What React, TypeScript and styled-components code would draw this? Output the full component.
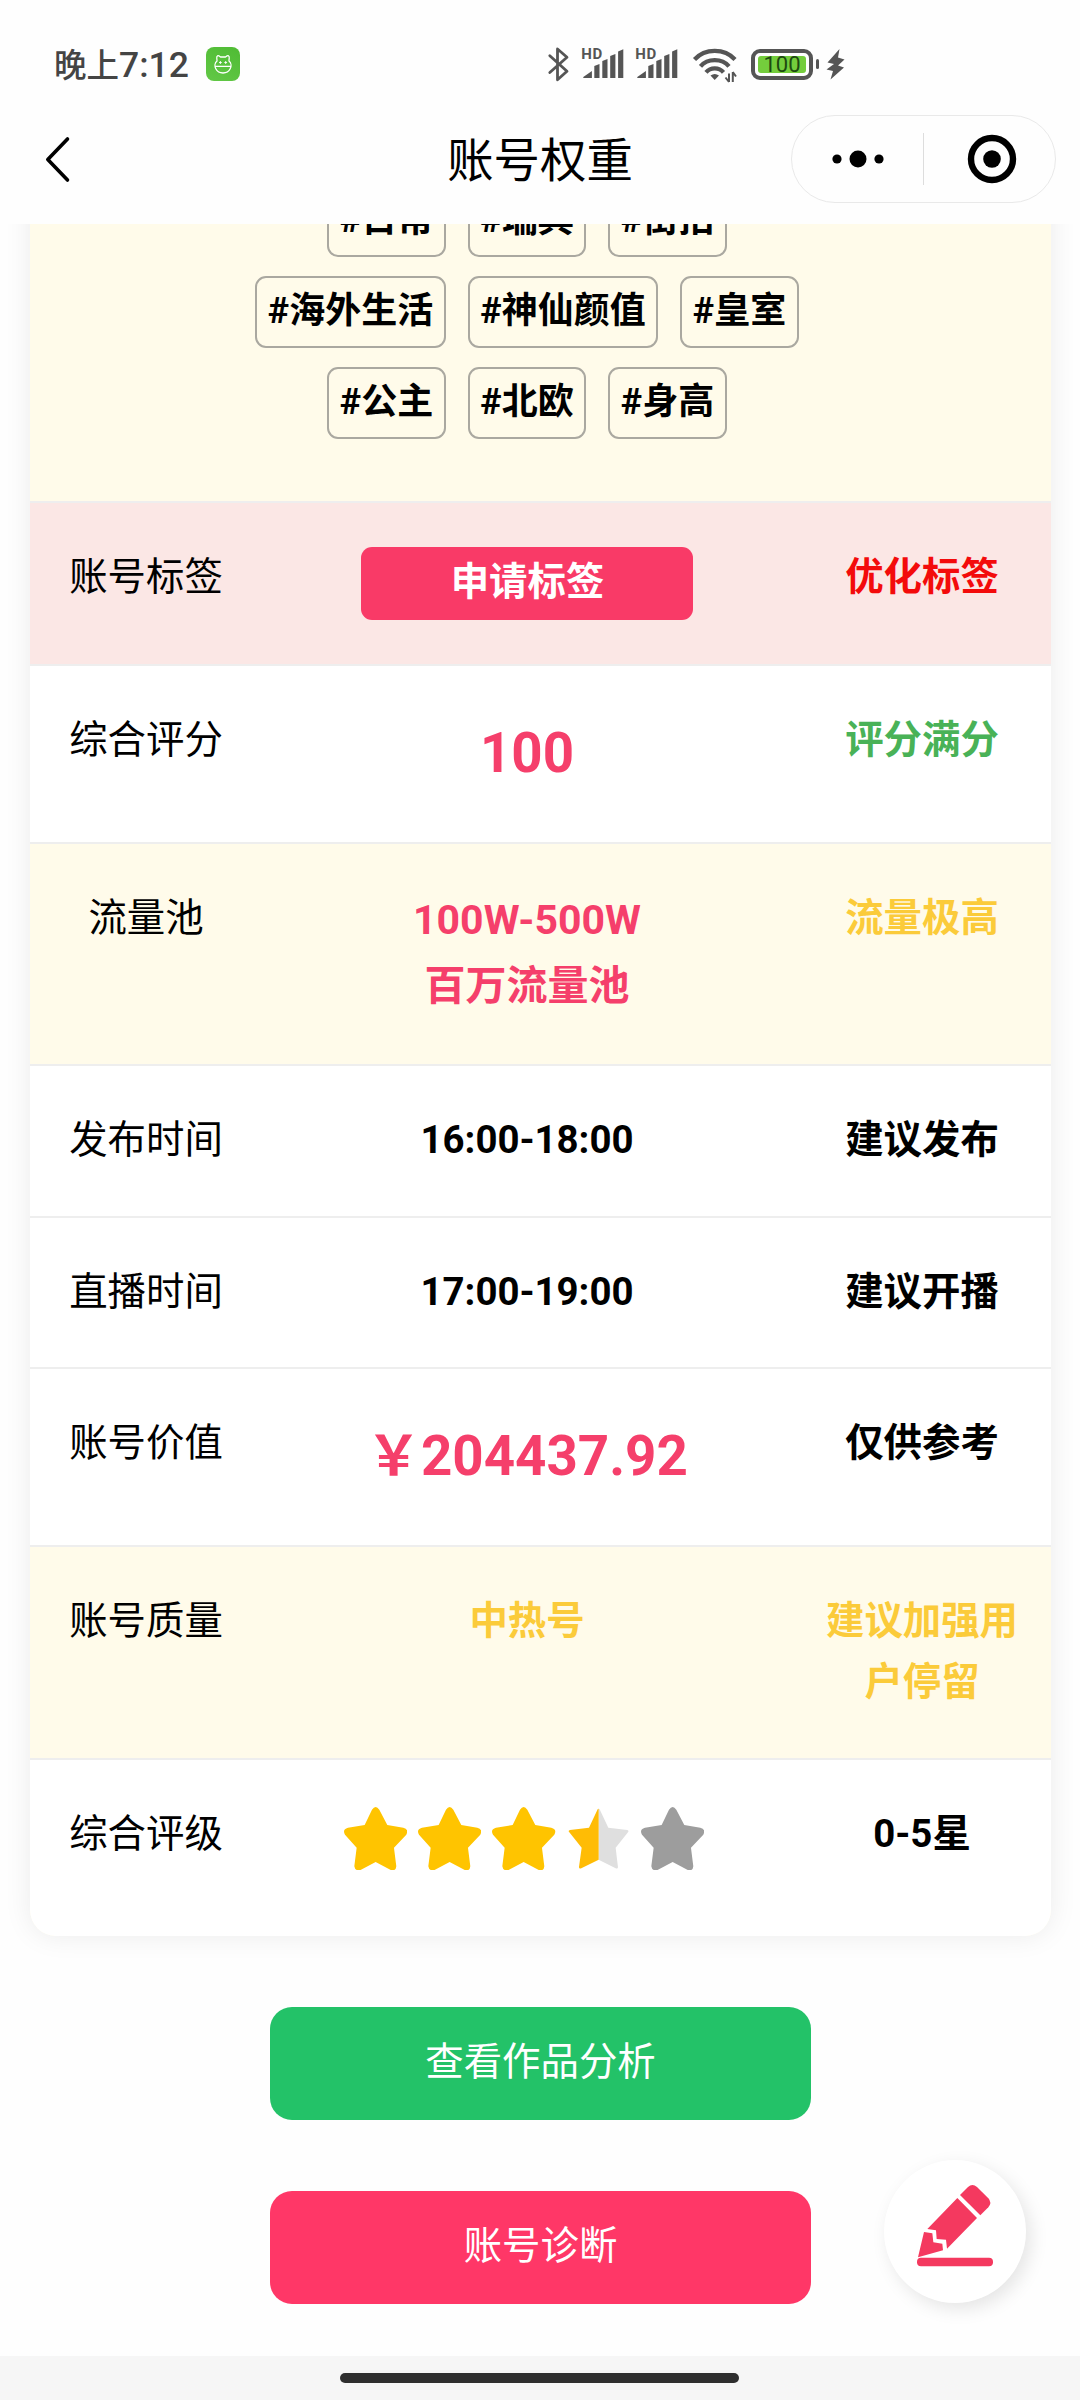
import React from "react";
import styled, { createGlobalStyle } from "styled-components";

const Global = createGlobalStyle`
  * { box-sizing: border-box; }
  body {
    margin: 0;
    background: #fefefe;
    font-family: Roboto, "Noto Sans CJK SC", sans-serif;
    color: #000;
  }
`;

const Screen = styled.div`
  width: 1080px;
  height: 2400px;
  display: flex;
  flex-direction: column;
  overflow: hidden;
  background: #fefefe;
`;

const StatusBar = styled.div`
  height: 115px;
  flex: none;
  display: flex;
  align-items: flex-start;
  padding: 47px 0 0 54px;
  color: #444;
`;

const Clock = styled.div`
  font-size: 35.5px;
  line-height: 36px;
  height: 34px;
  font-weight: 500;
  width: 152px;
  white-space: nowrap;
  span { font-size: 32.5px; }
`;

const AppBadge = styled.svg`
  width: 34px;
  height: 34px;
  margin-right: 308px;
  border-radius: 8px;
  background: linear-gradient(25deg, #62c846, #4fbb34);
`;

const StatusIcon = styled.svg<{ $w: number; $gap: number }>`
  width: ${(p) => p.$w}px;
  height: 36px;
  margin-right: ${(p) => p.$gap}px;
  overflow: visible;
  flex: none;
`;

const Battery = styled.div`
  width: 62px;
  height: 31px;
  margin: 2px 2.5px 0 0;
  padding: 3px;
  border: 4px solid #555;
  border-radius: 9px;
`;

const Charge = styled.div`
  height: 17px;
  border-radius: 3px;
  background: #74cd3c;
  color: #1d4a10;
  font-size: 22px;
  line-height: 18px;
  text-align: center;
`;

const Nub = styled.div`
  width: 3.5px;
  height: 10px;
  margin: 12px 7px 0 0;
  border-radius: 2px;
  background: #555;
`;

const NavBar = styled.div`
  height: 109px;
  flex: none;
  display: grid;
  grid-template-columns: 289px 1fr 265px;
  padding: 0 24px 0 0;
`;

const BackIcon = styled.svg`
  width: 30px;
  height: 50px;
  margin: 20px 0 0 42px;
`;

const Title = styled.h1`
  margin: 0;
  font-size: 46.4px;
  font-weight: 400;
  line-height: 93px;
  text-align: center;
  white-space: nowrap;
`;

const Capsule = styled.div`
  width: 265px;
  height: 88px;
  border: 1.5px solid #e9e9e9;
  border-radius: 44px;
  display: flex;
  align-items: center;
`;

const CapsuleHalf = styled.div`
  width: 131px;
  display: flex;
  align-items: center;
  justify-content: center;
  & + div + & {
    padding-left: 5px;
  }
  svg { display: block; }
`;

const CapsuleLine = styled.div`
  width: 1px;
  height: 52px;
  background: #ddd;
`;

const Scroll = styled.main`
  flex: 1;
  min-height: 0;
  overflow: hidden;
  padding: 0 29px 0 30px;
`;

const Card = styled.section`
  margin-top: -80px;
  padding-top: 41px;
  height: 1792px;
  border-radius: 26px;
  overflow: hidden;
  background: #fffbea;
  box-shadow: 0 0 28px rgba(0, 0, 0, 0.08);
`;

const Tags = styled.div`
  height: 316px;
  display: flex;
  flex-direction: column;
  gap: 19px;
  padding-right: 27px;
`;

const TagLine = styled.div`
  display: flex;
  justify-content: center;
  gap: 22.2px;
`;

const Tag = styled.span`
  height: 72px;
  padding: 0 10.5px;
  border: 2px solid #aaa8a0;
  border-radius: 11px;
  font-size: 36px;
  font-weight: 700;
  line-height: 66px;
  white-space: nowrap;
`;

const Row = styled.div<{ $h: number; $bg: string }>`
  height: ${(p) => p.$h}px;
  display: grid;
  grid-template-columns: 232px 530px 259px;
  padding-top: 42.5px;
  border-top: 2px solid #eeeeee;
  background: ${(p) => p.$bg};
  font-size: 38.4px;
  line-height: 61.4px;
  text-align: center;
`;

const Label = styled.div``;

const Value = styled.div<{ $color?: string; $size?: number }>`
  font-weight: 700;
  padding-top: ${(p) => (p.$size ? 1.5 : 0)}px;
  color: ${(p) => p.$color ?? "#000"};
  font-size: ${(p) => p.$size ?? 38.4}px;
  line-height: 1.6;
`;

const Hint = styled.div<{ $color?: string }>`
  padding: 0 19.5px 0 20.5px;
  font-weight: 700;
  color: ${(p) => p.$color ?? "#000"};
`;

const ApplyButton = styled.button`
  display: block;
  width: 332px;
  height: 73px;
  margin: 1.5px auto 0;
  padding: 0 0 4px 1px;
  border: 0;
  border-radius: 11px;
  background: #f93a67;
  color: #fff;
  font: inherit;
  line-height: 69px;
`;

const Stars = styled.div`
  display: flex;
  justify-content: center;
  gap: 11px;
  padding: 4.5px 6px 0 0;
  svg { width: 63.3px; height: 63.3px; display: block; }
`;

const Actions = styled.div`
  display: flex;
  flex-direction: column;
  align-items: center;
  gap: 71px;
  padding-top: 71px;
`;

const Action = styled.button<{ $bg: string }>`
  width: 541px;
  height: 113px;
  padding: 0 0 11px;
  border: 0;
  border-radius: 22px;
  background: ${(p) => p.$bg};
  color: #fff;
  font-family: inherit;
  font-size: 38.4px;
`;

const Fab = styled.button`
  position: absolute;
  left: 884px;
  top: 2160px;
  width: 142px;
  height: 143px;
  padding: 0;
  border: 0;
  border-radius: 50%;
  background: #fff;
  box-shadow: 5px 6px 18px rgba(0, 0, 0, 0.1);
  svg { display: block; }
`;

const HomeBar = styled.div`
  height: 44px;
  flex: none;
  background: #f6f6f6;
  padding: 17px 1px 0 0;
`;

const HomePill = styled.div`
  width: 399px;
  height: 10px;
  margin: 0 auto;
  border-radius: 5px;
  background: #2f2f2f;
`;

const PINK = "#f53f6b";
const AMBER = "#fbcb3a";
const CREAM = "#fffbea";

const STAR =
  "M84 8 Q95 -8 106 8 L130 54 L178 62 Q196 67 187 83 L150 122 L157 178 Q156 192 142 190 L95 165 L48 190 Q33 192 31 178 L38 122 L3 83 Q-6 67 12 62 L62 54 Z";

function Star({ kind }: { kind: "full" | "half" | "empty" }) {
  if (kind === "half") {
    return (
      <svg viewBox="0 0 190 190">
        <path d="M95 5 Q98 5 99 9 L124 62 L181 69 Q187 71 183 76 L146 122 L153 180 Q153 187 146 184 L95 158 Z" fill="#dfdfdf" />
        <path d="M95 5 Q92 5 91 9 L66 62 L9 69 Q2 71 7 76 L44 122 L36 180 Q36 187 43 184 L95 158 Z" fill="#ffbc05" />
      </svg>
    );
  }
  return (
    <svg viewBox="0 0 190 190">
      <path d={STAR} fill={kind === "full" ? "#ffc400" : "#9d9d9d"} />
    </svg>
  );
}

function Signal({ gap }: { gap: number }) {
  return (
    <StatusIcon $w={42} $gap={gap} viewBox="0 0 42 36" fill="#555">
      <text x="-0.8" y="11.5" fontSize="15" fontWeight="700" letterSpacing="0.8" fontFamily="Roboto">HD</text>
      <path d="M1.300 31v-1l8.600-6v7z M12.300 31V19l5.200-2v14z M20.300 31V14l5.200-2v19z M28.200 31V9l5.200-2v24z M36.100 31V4.500l5.200-2.200v28.700z" />
    </StatusIcon>
  );
}

const tagLines = [
  ["日常", "瑞典", "街拍"],
  ["海外生活", "神仙颜值", "皇室"],
  ["公主", "北欧", "身高"],
];

export default function App() {
  return (
    <Screen>
      <Global />
      <StatusBar>
        <Clock><span>晚上</span>7:12</Clock>
        <AppBadge viewBox="0 0 34 34" fill="none" stroke="#fff" strokeWidth="1.3">
          <path d="M11 14C11 11 10 9.500 11.500 8.800S14 10 14.500 10h5c.500 0 1.500-1.800 3-1.200S23 11 23 14c2.500 2 2.400 5.500 1.200 7.800C22.800 24.500 20 26 17 26s-5.800-1.500-7.200-4.200C8.600 19.500 8.500 16 11 14z M9 19.300h16" />
          <path d="M14.400 14v3M19.700 14v3M13 15.500h2.800M18.300 15.500h2.800" strokeWidth="0.9" />
        </AppBadge>
        <StatusIcon $w={21} $gap={13} viewBox="0 0 21 36" fill="none" stroke="#555" strokeWidth="2.8" strokeLinejoin="round" strokeLinecap="round">
          <path d="M1.800 8.800L19 24.200 9.500 32.800V2L19 10.300 1.800 25.500" />
        </StatusIcon>
        <Signal gap={12} />
        <Signal gap={15} />
        <StatusIcon $w={43} $gap={15} viewBox="0 0 43 36" fill="none" stroke="#555" strokeWidth="4.200">
          <path d="M1.500 12.500C12 1 31.500 1 42 12.500M7.500 19.300C14.500 11 29 11 36 19.300M13 25.300C17.500 20 26 20 30.500 25.300" />
          <path d="M17.500 28.500Q21.700 25.500 26 28.500L21.700 33z" fill="#555" stroke="none" />
          <path d="M36 35V26.500M36 35l-3.500-4.500M39.800 25v10M39.800 25l3.200 4.500" strokeWidth="2" />
        </StatusIcon>
        <Battery><Charge>100</Charge></Battery>
        <Nub />
        <StatusIcon $w={19} $gap={0} viewBox="0 0 19 36" fill="#555">
          <path d="M13.500 2L1.500 15.500 8 17 .5 22.500 7 24 4.500 32.500 18 20.500 12 18.500 18.500 12.500 12 10.500z" />
        </StatusIcon>
      </StatusBar>

      <NavBar>
        <BackIcon viewBox="0 0 30 50" fill="none" stroke="#000" strokeWidth="3.600" strokeLinecap="round" strokeLinejoin="round">
          <path d="M25.500 4L5.800 24.500 25.500 45" />
        </BackIcon>
        <Title>账号权重</Title>
        <Capsule>
          <CapsuleHalf>
            <svg width="54" height="20" viewBox="0 0 54 20">
              <circle cx="6" cy="10" r="4.600" /><circle cx="27" cy="10" r="8.500" /><circle cx="48" cy="10" r="4.600" />
            </svg>
          </CapsuleHalf>
          <CapsuleLine />
          <CapsuleHalf>
            <svg width="50" height="50" viewBox="0 0 50 50">
              <circle cx="25" cy="25" r="21" fill="none" stroke="#000" strokeWidth="6.400" /><circle cx="25" cy="25" r="8.800" />
            </svg>
          </CapsuleHalf>
        </Capsule>
      </NavBar>

      <Scroll>
        <Card>
          <Tags>
            {tagLines.map((line) => (
              <TagLine key={line[0]}>
                {line.map((t) => <Tag key={t}>#{t}</Tag>)}
              </TagLine>
            ))}
          </Tags>
          <Row $h={163} $bg="#fbe7e5">
            <Label>账号标签</Label>
            <Value><ApplyButton>申请标签</ApplyButton></Value>
            <Hint $color="#f30b0b">优化标签</Hint>
          </Row>
          <Row $h={178} $bg="#fff">
            <Label>综合评分</Label>
            <Value $color={PINK} $size={54.7}>100</Value>
            <Hint $color="#49b257">评分满分</Hint>
          </Row>
          <Row $h={222} $bg={CREAM}>
            <Label>流量池</Label>
            <Value $color={PINK} $size={41}>100W-500W<br />百万流量池</Value>
            <Hint $color={AMBER}>流量极高</Hint>
          </Row>
          <Row $h={152} $bg="#fff">
            <Label>发布时间</Label>
            <Value>16:00-18:00</Value>
            <Hint>建议发布</Hint>
          </Row>
          <Row $h={151} $bg="#fff">
            <Label>直播时间</Label>
            <Value>17:00-19:00</Value>
            <Hint>建议开播</Hint>
          </Row>
          <Row $h={178} $bg="#fff">
            <Label>账号价值</Label>
            <Value $color={PINK} $size={54.7}>￥204437.92</Value>
            <Hint>仅供参考</Hint>
          </Row>
          <Row $h={213} $bg={CREAM}>
            <Label>账号质量</Label>
            <Value $color={AMBER}>中热号</Value>
            <Hint $color={AMBER}>建议加强用户停留</Hint>
          </Row>
          <Row $h={178} $bg="#fff">
            <Label>综合评级</Label>
            <Stars>
              <Star kind="full" /><Star kind="full" /><Star kind="full" /><Star kind="half" /><Star kind="empty" />
            </Stars>
            <Hint>0-5星</Hint>
          </Row>
        </Card>
        <Actions>
          <Action $bg="#23c268">查看作品分析</Action>
          <Action $bg="#ff3767">账号诊断</Action>
        </Actions>
      </Scroll>

      <Fab aria-label="edit">
        <svg width="142" height="143" viewBox="132 90 426 429" fill="#f4395f">
          <rect x="231" y="383" width="228" height="26" rx="12" />
          <path d="M360 195L384 171Q397 159 411 171L445 205Q457 218 445 232L421 256Z" />
          <path d="M352 204L411 264L321 356L318 329L290 327L288 301L262 297Z" />
          <path d="M252 306L277 310L280 337L307 341L309 361L234 382Z" />
        </svg>
      </Fab>

      <HomeBar><HomePill /></HomeBar>
    </Screen>
  );
}
